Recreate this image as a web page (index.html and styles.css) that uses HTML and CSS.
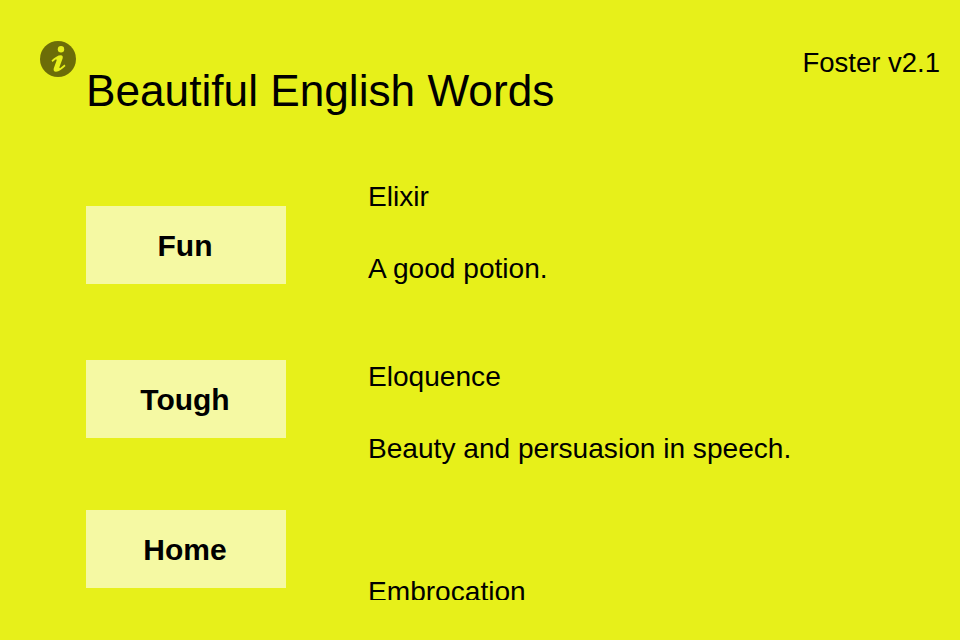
FILE: index.html
```html
<!DOCTYPE html>
<html lang="en">
<head>
    <meta charset="UTF-8">
    <meta name="viewport" content="width=device-width, initial-scale=1.0">
    <title>Beautiful English Words</title>
    <link rel="stylesheet" href="styles.css">
</head>
<body>

<div class="screen">
    <svg class="info-icon" width="36" height="36" viewBox="0 0 36 36">
        <circle cx="18" cy="18" r="18" fill="#6c6d08"/>
        <circle cx="21" cy="8.300" r="3.200" fill="#e7f01a"/>
        <path d="M11.500 19.500C15 16.300 18 14.300 20.700 14.300C22.800 14.300 23.100 16 22.600 17.500L19.500 26C19.200 27 19.800 27.300 20.600 26.800L24.500 23.600L25.500 25C22 28.200 19 30.700 16 30.700C13.800 30.700 13.300 29 13.800 27.200L16.600 19.500C16.900 18.500 16.300 18.200 15.600 18.600L12.500 20.900Z" fill="#e7f01a"/>
    </svg>

    <header class="top">
        <h1 class="title">Beautiful English Words</h1>
        <span class="version">Foster v2.1</span>
    </header>

    <div class="main">
        <nav class="categories">
            <a class="category cat-fun">Fun</a>
            <a class="category cat-tough">Tough</a>
            <a class="category cat-home">Home</a>
        </nav>

        <div class="words">
            <div class="word">
                <p>Elixir</p>
                <p>A good potion.</p>
            </div>
            <div class="word word-tall">
                <p>Eloquence</p>
                <p>Beauty and persuasion in speech.</p>
            </div>
            <div class="word">
                <p>Embrocation</p>
            </div>
        </div>
    </div>
</div>

</body>
</html>
```

FILE: styles.css
```css
html, body {
    margin: 0;
    padding: 0;
}

body {
    font-family: "Liberation Sans", Arial, sans-serif;
    background-color: #e7f01a;
    color: #000;
}

.screen {
    position: relative;
    width: 960px;
    height: 640px;
    overflow: hidden;
}

.info-icon {
    position: absolute;
    left: 40px;
    top: 41px;
}

.top {
    display: flex;
    justify-content: space-between;
    align-items: flex-start;
    padding: 46px 20px 0 86px;
}

.title {
    margin: 20px 0 0 0;
    font-size: 44.200px;
    line-height: 50px;
    font-weight: normal;
}

.version {
    margin-top: 1px;
    font-size: 27.500px;
    line-height: 32px;
}

.main {
    display: flex;
    padding-left: 86px;
}

.categories {
    width: 200px;
    padding-top: 90px;
    display: flex;
    flex-direction: column;
}

.category {
    display: flex;
    align-items: center;
    justify-content: center;
    height: 78px;
    padding: 1px 2px 0 0;
    box-sizing: border-box;
    background-color: #f5f9a3;
    font-size: 30px;
    font-weight: bold;
}

.cat-tough {
    margin-top: 76px;
}

.cat-home {
    margin-top: 72px;
}

.words {
    margin-left: 82px;
    margin-top: 65px;
    height: 419px;
    width: 560px;
    overflow: hidden;
    font-size: 28.100px;
    line-height: 32px;
}

.word {
    height: 180px;
}

.word-tall {
    height: 215px;
}

.word p {
    margin: 0 0 40px 0;
}
```
